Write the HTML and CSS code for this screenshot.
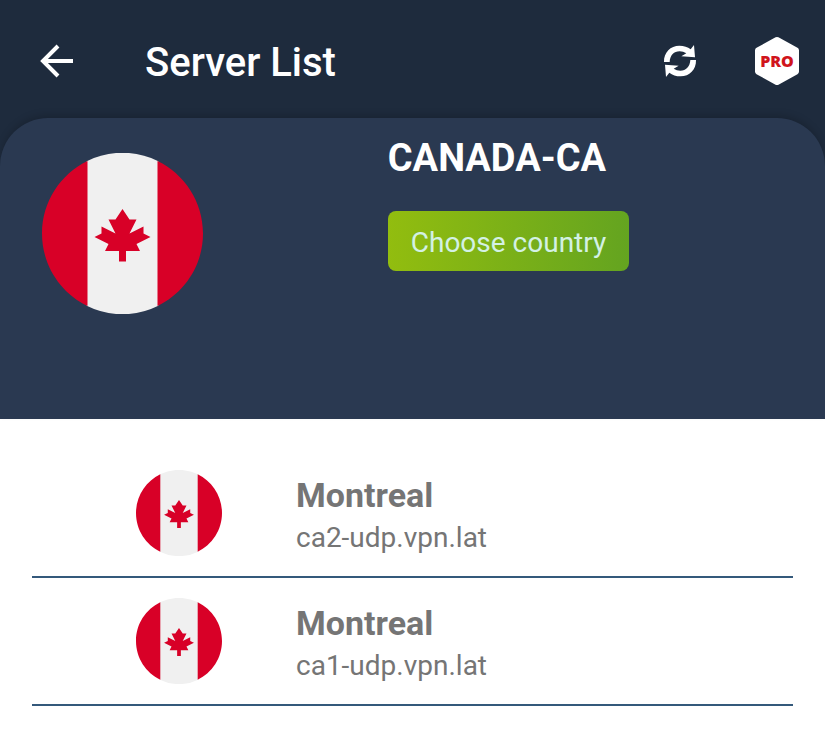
FILE: index.html
```
<!DOCTYPE html>
<html lang="en">
<head>
  <meta charset="UTF-8">
  <meta name="viewport" content="width=device-width, initial-scale=1.0">
  <title>Server List</title>
  <link rel="stylesheet" href="styles.css">
</head>
<body>
  <!-- shared flag artwork -->
  <svg class="sprite" aria-hidden="true">
    <symbol id="flag-ca" viewBox="0 0 512 512">
      <path fill="#f0f0f0" d="M142 26a256 256 0 0 1 228 0v460a256 256 0 0 1-228 0z"/>
      <path fill="#d80027" d="M144.700 25.400C59.100 66.800 0 154.500 0 256s59.100 189.200 144.700 230.600zM367.300 25.400v461.200C452.900 445.200 512 357.500 512 256S452.900 66.800 367.300 25.400z"/>
      <path fill="#d80027" d="M300.500 289.400l44.500-22.300-22.200-11.100v-22.300L278.300 256l22.200-44.500h-22.200L256 178.100l-22.300 33.400h-22.200l22.200 44.500-44.500-22.300V256L167 267.100l44.500 22.300-11.100 22.300h44.500v33.300h22.200v-33.300h44.500z"/>
    </symbol>
  </svg>

  <header class="top-bar">
    <button class="icon-button back" aria-label="Back">
      <svg width="34" height="34" viewBox="0 0 34 34" fill="none" stroke="#fff" stroke-width="4">
        <path d="M33 17H4M18 2L3 17l15 15"/>
      </svg>
    </button>
    <h1>Server List</h1>
    <button class="icon-button" aria-label="Refresh">
      <svg width="34" height="34" viewBox="69 70 102 102" fill="#fff">
        <path id="arrow" d="M72 124C71 95 92 75 118 75C132 75 143 79 152 86L162 73L165 110L124 107L139 98C133 94 126 92 119 92C102 92 90 104 89 124Z"/>
        <use href="#arrow" transform="rotate(180 120 121)"/>
      </svg>
    </button>
    <button class="icon-button pro" aria-label="PRO">
      <svg width="44" height="48" viewBox="0 0 44 48">
        <path d="M22 3L41 13.500v21L22 45 3 34.500v-21z" fill="#fff" stroke="#fff" stroke-width="6" stroke-linejoin="round"/>
      </svg>
      <span>PRO</span>
    </button>
  </header>

  <section class="country">
    <svg class="country-flag" role="img" aria-label="Canada"><use href="#flag-ca"/></svg>
    <div class="country-info">
      <h2>CANADA-CA</h2>
      <button class="choose">Choose country</button>
    </div>
  </section>

  <ul class="servers">
    <li>
      <a class="server" href="#ca2">
        <svg class="server-flag" aria-hidden="true"><use href="#flag-ca"/></svg>
        <span class="server-text">
          <span class="city">Montreal</span>
          <span class="host">ca2-udp.vpn.lat</span>
        </span>
      </a>
    </li>
    <li>
      <a class="server" href="#ca1">
        <svg class="server-flag" aria-hidden="true"><use href="#flag-ca"/></svg>
        <span class="server-text">
          <span class="city">Montreal</span>
          <span class="host">ca1-udp.vpn.lat</span>
        </span>
      </a>
    </li>
  </ul>
</body>
</html>
```
FILE: styles.css
```
* {
  box-sizing: border-box;
}
body {
  margin: 0;
  font-family: Roboto, sans-serif;
  background: #fff;
}
h1, h2, ul {
  margin: 0;
  padding: 0;
}
button {
  font-family: inherit;
  border: none;
  cursor: pointer;
}
svg {
  display: block;
}
.sprite {
  position: absolute;
  width: 0;
  height: 0;
}
.top-bar {
  display: flex;
  align-items: center;
  padding: 34px 26px 78px 40px;
  height: 166px;
  background: #1e2b3d;
}
.top-bar h1 {
  flex: 1;
  margin-left: 71px;
  padding-top: 4px;
  font-size: 40px;
  line-height: 48px;
  font-weight: 500;
  color: #fff;
}
.icon-button {
  display: grid;
  place-items: center;
  padding: 0;
  background: none;
}
.pro {
  position: relative;
  margin-left: 58px;
}
.pro span {
  position: absolute;
  font-family: "Open Sans", sans-serif;
  font-size: 16px;
  font-weight: 800;
  color: #d0141c;
}
.country {
  display: grid;
  grid-template-columns: 47% 1fr;
  min-height: 301px;
  margin-top: -48px;
  background: #2a3951;
  border-radius: 48px 48px 0 0;
  box-shadow: 0 -4px 8px -2px rgba(0, 0, 0, 0.2);
}
.country-flag {
  width: 161px;
  height: 161px;
  margin: 35px 0 0 42px;
}
.country-info {
  padding-top: 17px;
}
.country-info h2 {
  font-size: 38px;
  line-height: 46px;
  font-weight: 700;
  color: #fff;
}
.choose {
  margin-top: 30px;
  padding: 2px 23px 0;
  height: 60px;
  font-size: 28px;
  color: #d3f1e4;
  background: linear-gradient(90deg, #92bd0f, #64a420);
  border-radius: 8px;
}
.servers {
  list-style: none;
  padding: 31px 32px;
}
.server {
  display: flex;
  align-items: center;
  gap: 74px;
  height: 128px;
  padding-left: 104px;
  border-bottom: 2px solid #34597b;
  color: #757575;
  text-decoration: none;
}
.server-flag {
  width: 86px;
  height: 86px;
}
.server-text {
  padding-top: 6px;
}
.city, .host {
  display: block;
}
.city {
  font-size: 34px;
  line-height: 44px;
  font-weight: 700;
}
.host {
  font-size: 28px;
  line-height: 42px;
}
```
